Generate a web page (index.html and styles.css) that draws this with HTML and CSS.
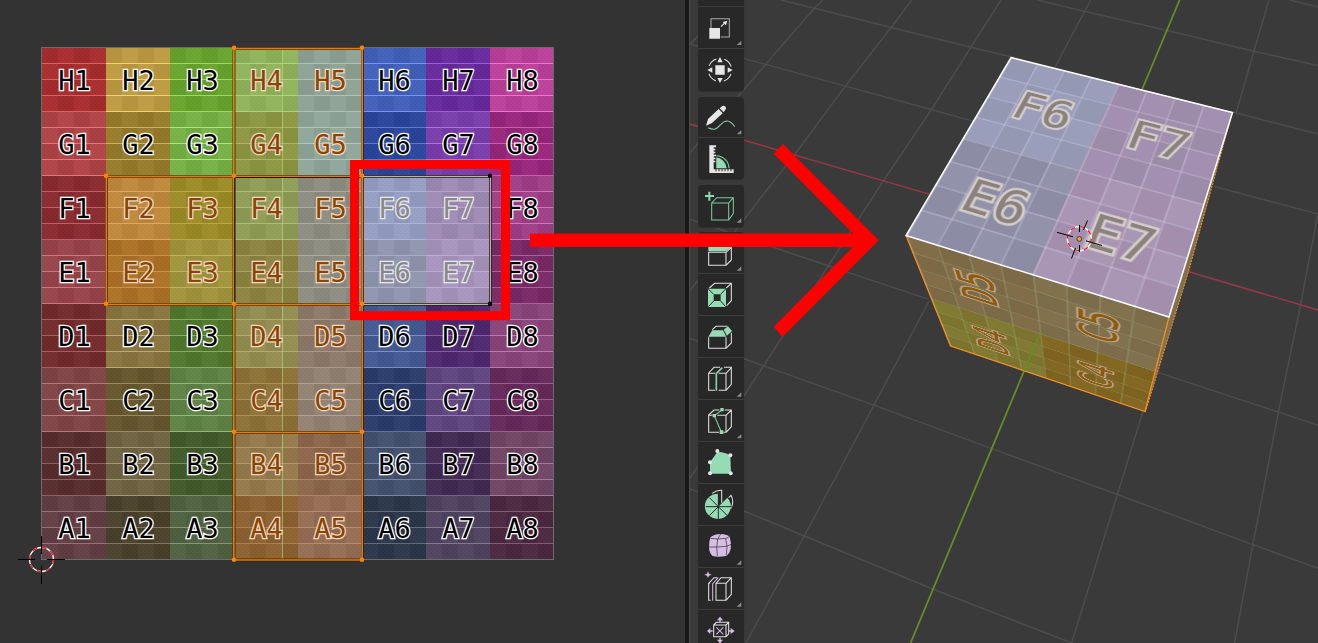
FILE: index.html
```html
<!DOCTYPE html>
<html lang="en">
<head>
<meta charset="utf-8">
<title>UV Editing</title>
<link rel="stylesheet" href="styles.css">
</head>
<body>
<main class="workspace">
  <section class="uv-editor">
    <div class="uv-grid" id="uv-grid"></div>
    <svg class="uv-overlay" viewBox="0 0 685 643">
      <rect class="image-border" x="41.5" y="47.5" width="512" height="512"/>
      <path class="lattice" d="M282.5 48V559"/>
      <g id="edges">
        <path class="edge-back" d="M234 48.5H362M106 176.5H362M106 304.5H362M234 432.5H362M234 560H362M106.5 176V304M234 48V560M362.5 48V560"/>
        <path class="edge-front" d="M234 48.5H362M106 176.5H362M106 304.5H362M234 432.5H362M234 560H362M106.3 176V304M233.8 48V560M362.2 48V560"/>
        <path class="seam" d="M234.5 177.5H362M234.7 177V304"/>
        <path class="edge-back" d="M363 176.5H490.5V304.5H363"/>
        <path class="edge-free" d="M363 176.5H490.5V304.5H363"/>
      </g>
      <g class="verts">
        <circle cx="234" cy="47.8" r="2.3"/><circle cx="362" cy="47.8" r="2.3"/>
        <circle cx="106" cy="175.8" r="2.3"/><circle cx="234" cy="175.8" r="2.3"/><circle cx="362" cy="175.8" r="2.3"/>
        <circle cx="106" cy="303.8" r="2.3"/><circle cx="234" cy="303.8" r="2.3"/><circle cx="362" cy="303.8" r="2.3"/>
        <circle cx="234" cy="431.8" r="2.3"/><circle cx="362" cy="431.8" r="2.3"/>
        <circle cx="234" cy="559.8" r="2.3"/><circle cx="362" cy="559.8" r="2.3"/>
        <circle class="vert-free" cx="490" cy="175.8" r="2.2"/><circle class="vert-free" cx="490" cy="303.8" r="2.2"/>
      </g>
      <g class="cursor">
        <circle class="ring-white" cx="41.5" cy="559.5" r="12"/>
        <circle class="ring-red" cx="41.5" cy="559.5" r="12"/>
        <path class="hair" d="M41.5 536V554M41.5 566V584M18 559.5H35M47 559.5H65"/>
      </g>
    </svg>
  </section>
  <div class="divider"></div>
  <section class="viewport">
    <svg class="floor" viewBox="-147.5 0 1715.5 1568" preserveAspectRatio="none">
      <g class="grid-lines">
        <path d="M-150 107L0 143L59 157L277 210L512 267L640 299M1285 455L1568 522"/>
        <path d="M100 0L192 20L402 67L620 115L740 141M1335 273L1568 327"/>
        <path d="M800 0L932 28L1165 76L1393 125L1568 160M1490 0L1568 17"/>
        <path d="M-150 534L130 618L505 730M1130 908L1460 1005L1568 1037"/>
        <path d="M-150 824L0 875L355 988L677 1094L1020 1206L1390 1328L1568 1386"/>
        <path d="M-150 1191L0 1246L165 1307L517 1437L895 1568"/>
        <path d="M947 0L850 163M505 735L355 988L165 1307L5 1568"/>
        <path d="M702 0L620 115L512 267L380 442L55 890L0 965L-150 1170"/>
        <path d="M458 0L402 67L277 210L140 375L0 535L-150 712"/>
        <path d="M215 0L192 20L59 157L0 218L-150 375M-30 0L-150 110"/>
        <path d="M1434 0L1393 125L1345 273M1090 1003L1020 1206L895 1568"/>
        <path d="M1568 520L1520 745L1460 1005L1390 1328L1340 1568"/>
      </g>
      <path class="axis-x" d="M-150 302L0 342L508 474L1213 662L1568 756"/>
      <path class="axis-y" d="M1190 0L1088 217M808 815L765 905L455 1568"/>
    </svg>
    <div class="face face-front" data-quad="950.5,346 906,235.5 1169,317 1145.5,412">
      <div class="patch d4">D4</div><div class="patch d5">D5</div>
      <div class="patch c4">C4</div><div class="patch c5">C5</div>
    </div>
    <div class="face face-top" data-quad="1011,57.5 1232.5,112 1169,317 906,235.5">
      <div class="patch f6">F6</div><div class="patch f7">F7</div>
      <div class="patch e6">E6</div><div class="patch e7">E7</div>
    </div>
    <svg class="cube-lines" viewBox="690 0 628 643">
      <path class="side" d="M1232.5 112L1188.5 271.5L1145.5 411.5L1169 317Z"/>
      <path class="side-dash" d="M1232.5 112L1188.5 271.5L1145.5 411.5"/>
      <path class="side-edge" d="M906 235.5L950.5 346L1145 411.5L1169 317"/>
      <path class="top-edge" d="M1011 57.5L1232.5 112.5L1169 317L906 235.5Z"/>
      <path class="axis-y" d="M1039.8 334L1024 371"/>
      <circle class="ring-white" cx="1079.3" cy="238.7" r="12"/>
      <circle class="ring-red" cx="1079.3" cy="238.7" r="12"/>
      <path class="hair" d="M1079.5 225V232M1079.5 245V252M1057 232.3L1073 236.8M1086 240.8L1102 245.5M1087.5 220.5L1083.5 230M1075.5 248L1071.5 258.5"/>
      <circle class="origin" cx="1079.3" cy="238.9" r="2.4"/>
    </svg>
    <nav class="toolbar">
      <div class="tool-group group-transform">
        <div class="tool stub"></div>
        <div class="tool"><svg viewBox="54 21 138 126">
          <path class="w2 dim" d="M93 84V56H148V111H122"/><path class="fw" d="M88 84H120V116H88Z"/>
          <path class="w2" d="M123 80L134 69"/><path class="fw" d="M142 62L138 76L128 66Z"/><path class="corner" d="M184 122V135H170Z"/></svg></div>
        <div class="tool"><svg viewBox="54 147 138 126">
          <circle class="w2" cx="120" cy="210" r="35" stroke-dasharray="31 24" stroke-dashoffset="-12"/>
          <path class="fw" d="M106 196H134V224H106ZM120 171L128 187H112ZM120 249L128 234H112ZM82 210L97 202V218ZM158 210L143 202V218Z"/></svg></div>
      </div>
      <div class="tool-group group-annotate">
        <div class="tool"><svg viewBox="54 291 138 126">
          <path class="g3" d="M84 383C108 394 112 383 122 374C134 361 148 356 164 380"/>
          <path class="fw" d="M78 377L84 357L116 327L128 340L96 369ZM119 325L127 318Q137 315 138 326L131 337Z"/><path class="corner" d="M184 390V403H170Z"/></svg></div>
        <div class="tool"><svg viewBox="54 414 138 126">
          <path class="fg" d="M109 472A36 36 0 0 1 140 505H109Z"/><path class="g3" d="M109 467A39 39 0 0 1 147 505"/>
          <path class="fw" d="M88 436H108V442H101V446H106V451H101V455H106V460H101V464H108V469H101V473H106V478H101V482H106V487H101V508H161V519H88Z"/>
          <path class="tick" d="M108 508V514M117 508V514M126 508V514M135 508V514M144 508V514M153 508V514"/></svg></div>
      </div>
      <div class="tool-group group-add">
        <div class="tool"><svg viewBox="54 556 138 126">
          <path class="gp" d="M88 576V603M75 589H102"/>
          <path class="g2" d="M95 610H146V661H95ZM95 610L110 594H160V642L146 661M146 610L160 594"/><path class="corner" d="M184 656V669H170Z"/></svg></div>
      </div>
      <div class="tool-group group-mesh">
        <div class="tool"><svg viewBox="54 36 138 126">
          <path class="fg" d="M85 78H138L154 64V80L138 94H85Z"/><path class="w2" d="M86 97V136H138V97ZM138 97L154 82V120L138 136"/><path class="corner" d="M184 139V152H170Z"/></svg></div>
        <div class="tool"><svg viewBox="54 162 138 126">
          <path class="fg" fill-rule="evenodd" d="M84 206H138V261H84ZM101 223V243H122V223Z"/><path class="cut" d="M85 207L101 223M137 207L122 223M85 260L101 243M137 260L122 243"/>
          <path class="w2" d="M88 204L104 190H154V242L140 257M139 204L154 190"/></svg></div>
        <div class="tool"><svg viewBox="54 288 138 126">
          <path class="fg" d="M85 350L97 331H129L139 350ZM131 329L144 319L156 333L141 347Z"/>
          <path class="w2" d="M86 352V385H138V352M138 385L154 369V338M97 329L108 319H142"/></svg></div>
        <div class="tool"><svg viewBox="54 414 138 126">
          <path class="w2" d="M105 460H86V511H105M116 511H138V460H116M86 459L102 442H120M132 442H154V493L138 511M138 460L154 443"/>
          <path class="g3 thick" d="M109 512V460L127 443"/><path class="corner" d="M184 517V530H170Z"/></svg></div>
        <div class="tool"><svg viewBox="54 540 138 126">
          <path class="w2" d="M98 586H86V637H117M112 586H138V637H130M86 585L102 570H118M134 570H154V620L138 637M138 586L154 570"/>
          <path class="g3" d="M126 570L103 587L124 636"/><path class="fg" d="M121 564h10v10h-10zM98 582h10v10h-10zM119 631h11v11h-11z"/><path class="corner" d="M184 642V655H170Z"/></svg></div>
        <div class="tool"><svg viewBox="54 36 138 126">
          <path class="fg" d="M90 97L112 66Q134 65 151 77L153 131H90Z"/>
          <g class="fw"><circle cx="112" cy="63" r="6"/><circle cx="151" cy="76" r="6"/><circle cx="90" cy="97" r="6"/><circle cx="90" cy="130" r="6"/><circle cx="152" cy="130" r="6"/></g></svg></div>
        <div class="tool"><svg viewBox="54 162 138 126">
          <path class="w2" d="M96 190Q111 180 125 181V218M146 203L153 196Q164 216 152 236"/>
          <path class="fg" d="M115 230V191A39 38 0 1 0 142 203Z"/>
          <path class="cut" d="M115 230V268M115 230L88 203M115 230H77M115 230L88 257M115 230L142 257M115 230H155M115 230V191"/></svg></div>
        <div class="tool"><svg viewBox="54 288 138 126">
          <path class="fp" d="M92 321Q104 312 122 312Q139 312 149 320Q155 339 152 357Q149 371 140 377Q116 383 98 378Q87 369 87 350Q87 332 92 321Z"/>
          <path class="cut thin" d="M86 351H112L139 349L154 343M112 378Q108 349 113 327L122 312M139 376Q144 348 137 326L149 319M92 325L113 327L137 325"/><path class="corner" d="M184 391V404H170Z"/></svg></div>
        <div class="tool"><svg viewBox="54 414 138 126">
          <path class="fp" d="M84 424L87 431L95 434L87 437L84 444L81 437L73 434L81 431Z"/>
          <path class="w2" d="M90 460H86V511H92M108 460H138V511H108ZM86 460L102 443H112M108 460L123 443H154V493L138 511M138 460L154 443"/>
          <path class="p3" d="M98 512V461L115 443"/><path class="corner" d="M184 517V530H170Z"/></svg></div>
        <div class="tool last"><svg viewBox="54 540 138 126">
          <path class="w2" d="M101 585H138V620H101ZM101 585L109 577H146V612L138 620M138 585L146 577"/>
          <path class="fp" d="M120 560L129 571H122V577H118V571H111ZM120 640L129 629H122V623H118V629H111ZM81 603L91 594V601H98V605H91V612ZM164 603L152 594V601H145V605H152V612Z"/>
          <path class="p3" d="M109 592L130 613M130 592L109 613"/></svg></div>
      </div>
    </nav>
  </section>
  <svg class="annotation" viewBox="0 0 1318 643">
    <rect x="354.5" y="164.5" width="151" height="151.2"/>
    <path d="M530 233.5H853L773.7 153.8L783 144L878.7 240.3L782.5 337L773.7 326.8L853 247H530Z"/>
  </svg>
</main>
<script src="app.js"></script>
</body>
</html>
```
FILE: styles.css
```css
body { margin: 0; background: #333; overflow: hidden; }
.workspace { position: relative; display: flex; width: 1318px; height: 643px; overflow: hidden; }

/* UV editor */
.uv-editor { position: relative; width: 685px; height: 643px; background: #333; flex: none; }
.uv-grid { display: grid; grid-template-columns: repeat(8, 64px); grid-auto-rows: 64px; margin: 48px 0 0 42px; width: 512px; }
.cell {
  position: relative;
  height: 64px;
  font: 27px/66px "DejaVu Sans Mono", monospace;
  text-align: center;
  text-indent: 1px;
  color: #000;
  -webkit-text-stroke: 2.6px #fff;
  paint-order: stroke fill;
  background-color: var(--base);
  background-image:
    repeating-linear-gradient(to bottom, transparent 0 15px, var(--line) 15px 16px),
    conic-gradient(rgba(255,255,255,.018) 25%, rgba(0,0,0,.045) 0 50%, rgba(255,255,255,.018) 0 75%, rgba(0,0,0,.045) 0),
    conic-gradient(rgba(255,255,255,.025) 25%, transparent 0 50%, rgba(255,255,255,.025) 0 75%, transparent 0);
  background-size: auto, 32px 32px, 4px 4px;
}
.cell.selected { color: #8a4500; -webkit-text-stroke-color: #f0d9c6; }
.cell.active { color: #888; -webkit-text-stroke-color: #e9e8ee; }
.uv-overlay, .annotation { position: absolute; left: 0; top: 0; width: 100%; height: 100%; }
svg path, svg circle, svg rect { fill: none; }
.image-border { stroke: #6c6c6c; }
.lattice { stroke: #b4e88c; stroke-opacity: .55; }
.edge-back { stroke: #2a1c08; stroke-opacity: .75; stroke-width: 3; }
.edge-front { stroke: #e87a08; stroke-width: 1.6; }
.seam { stroke: #161616; }
.edge-free { stroke: #b4b4b4; }
svg .verts circle { fill: #ff8500; }
svg .verts .vert-free { fill: #000; }
.ring-white { stroke: #fff; stroke-width: 1.3; }
.ring-red { stroke: #f01820; stroke-width: 1.3; stroke-dasharray: 4.71 4.71; }
.hair { stroke: #000; }

/* Area border */
.divider { width: 4px; background: #191919; border-right: 1px solid #4c4c4c; flex: none; }

/* 3D viewport */
.viewport { position: relative; flex: 1; height: 643px; background: #3a3a3a; overflow: hidden; }
.floor, .cube-lines { position: absolute; left: 0; top: 0; width: 628px; height: 643px; }
.floor path { vector-effect: non-scaling-stroke; }
.grid-lines path { stroke: #4c4c4c; stroke-width: 1.5; }
.axis-x { stroke: #963848; stroke-width: 1.5; }
.axis-y { stroke: #668c25; stroke-width: 1.8; }
.face {
  position: absolute; left: 0; top: 0; width: 256px; height: 256px;
  display: grid; grid-template-columns: 128px 128px; grid-auto-rows: 128px;
  transform-origin: 0 0;
}
.patch {
  font: 54px/130px "DejaVu Sans Mono", monospace;
  height: 128px;
  text-align: center;
  text-indent: 1px;
  paint-order: stroke fill;
  background-image:
    linear-gradient(to bottom, var(--rule) 1.6px, transparent 0),
    linear-gradient(to right, var(--rule) 1.6px, transparent 0),
    conic-gradient(rgba(255,255,255,.012) 25%, rgba(0,0,0,.03) 0 50%, rgba(255,255,255,.012) 0 75%, rgba(0,0,0,.03) 0);
  background-size: 32px 32px, 32px 32px, 64px 64px;
}
.face-top .patch { --rule: rgba(220,215,238,.27); color: #8b827d; -webkit-text-stroke: 5.5px #d4cdca; }
.face-front .patch { --rule: rgba(150,170,130,.3); color: #8e5a0c; -webkit-text-stroke: 4.5px #b8a08a; }
.f6 { background-color: #999db9; }
.f7 { background-color: #a28faf; }
.e6 { background-color: #9192a9; }
.e7 { background-color: #a894b3; }
.d4 { background-color: #807830; }
.d5 { background-color: #806c47; }
.c4 { background-color: #816620; }
.c5 { background-color: #80704b; }
svg .side { fill: #84704c; }
.side-dash { stroke: #ff9420; stroke-dasharray: 2 1.2; }
.side-edge { stroke: #f79322; stroke-width: 1.2; }
.top-edge { stroke: #fff; stroke-width: 1.5; }
svg .origin { fill: #ff9a28; stroke: #33291c; stroke-width: .8; }

/* Toolbar */
.toolbar { position: absolute; left: 8px; top: 0; width: 46px; display: flex; flex-direction: column; gap: 6px; }
.tool-group { background: #282828; border-radius: 4px; overflow: hidden; box-shadow: 0 1px 1px #2e2e2e; }
.tool { height: 41px; border-bottom: 1px solid #3e3e3e; }
.tool svg { display: block; width: 46px; height: 42px; }
.tool:last-child { border-bottom: 0; }
.stub { height: 6px; }
.group-annotate { height: 82px; }
.group-annotate .tool:first-child { height: 40px; }
.group-transform { border-radius: 0 0 4px 4px; height: 91px; }
.group-add { height: 42px; }
.group-mesh { margin-top: -1px; }
.w2, .g2, .g3, .p3, .cut, .gp, .tick { stroke-width: 3.2; }
.w2 { stroke: #dedede; }
.dim { stroke: #a8a8a8; }
svg .fw, svg .fw circle { fill: #e6e6e6; }
svg .fg { fill: #95dcb5; }
svg .fp { fill: #d6bde4; }
.g2 { stroke: #80c49f; }
.g3 { stroke: #86cfa8; }
.thick { stroke-width: 5; }
.gp { stroke: #8cdcb1; stroke-width: 6; }
.p3 { stroke: #cfb3dd; }
.cut { stroke: #282828; stroke-width: 3; }
.cut.thin { stroke-width: 2; }
.tick { stroke: #282828; }
svg .corner { fill: #8a8a8a; }

/* Annotation */
.annotation { pointer-events: none; }
.annotation rect { stroke: #f00; stroke-width: 9; }
.annotation path { fill: #f00; }
```
FILE: app.js
```js
// Colour grid: one row per letter, eight columns each.
const rows = {
  H: ["a72a2b", "bd9a3e", "66a42b", "90b359", "8da194", "405ebb", "66279c", "bb3d99"],
  G: ["af4144", "967a28", "74b042", "8c9640", "8ea59a", "27439c", "773baa", "982479"],
  F: ["89282d", "bf883a", "9b8a24", "8e9d54", "8c8d80", "949dc2", "9e8ab4", "9e3c86"],
  E: ["974248", "ab7124", "a09339", "8c833e", "8c8d80", "8f95ad", "a693bc", "782765"],
  D: ["72282a", "87733c", "4e772b", "928c4e", "8d7868", "425892", "4c266e", "884278"],
  C: ["7f4244", "65552b", "5d8244", "8c7034", "918172", "293a6a", "5e437e", "642758"],
  B: ["572a2b", "6e6140", "3f5928", "937849", "8d6548", "414f6d", "402852", "6f4362"],
  A: ["603c42", "483f29", "4f6040", "8c602e", "946c52", "293448", "4e415e", "4a263e"]
};
const grid = document.getElementById("uv-grid");
for (const [letter, colours] of Object.entries(rows)) {
  colours.forEach((hex, i) => {
    const col = i + 1;
    const middle = letter === "F" || letter === "E";
    const active = middle && (col === 6 || col === 7);
    const selected = col === 4 || col === 5 || (middle && (col === 2 || col === 3));
    const lift = active ? 24 : selected ? 32 : 54;
    const rgb = [0, 2, 4].map(k => Math.min(255, parseInt(hex.slice(k, k + 2), 16) + lift));
    const cell = document.createElement("div");
    cell.className = "cell" + (active ? " active" : selected ? " selected" : "");
    cell.textContent = letter + col;
    cell.style.setProperty("--base", "#" + hex);
    cell.style.setProperty("--line", `rgb(${rgb.join(",")})`);
    grid.append(cell);
  });
}

// Maps a square of side s onto a quad given as TL, TR, BR, BL.
function projectSquare(s, [p0, p1, p2, p3]) {
  const dx1 = p1[0] - p2[0], dx2 = p3[0] - p2[0], sx = p0[0] - p1[0] + p2[0] - p3[0];
  const dy1 = p1[1] - p2[1], dy2 = p3[1] - p2[1], sy = p0[1] - p1[1] + p2[1] - p3[1];
  const det = dx1 * dy2 - dx2 * dy1;
  const g = (sx * dy2 - dx2 * sy) / det, h = (dx1 * sy - sx * dy1) / det;
  const a = p1[0] - p0[0] + g * p1[0], b = p3[0] - p0[0] + h * p3[0];
  const d = p1[1] - p0[1] + g * p1[1], e = p3[1] - p0[1] + h * p3[1];
  return [a / s, d / s, 0, g / s, b / s, e / s, 0, h / s, 0, 0, 1, 0, p0[0], p0[1], 0, 1];
}
document.querySelectorAll(".face").forEach(face => {
  const quad = face.dataset.quad.split(" ").map(p => {
    const [x, y] = p.split(",").map(Number);
    return [x - 690, y];
  });
  face.style.transform = `matrix3d(${projectSquare(256, quad).join(",")})`;
});
```
